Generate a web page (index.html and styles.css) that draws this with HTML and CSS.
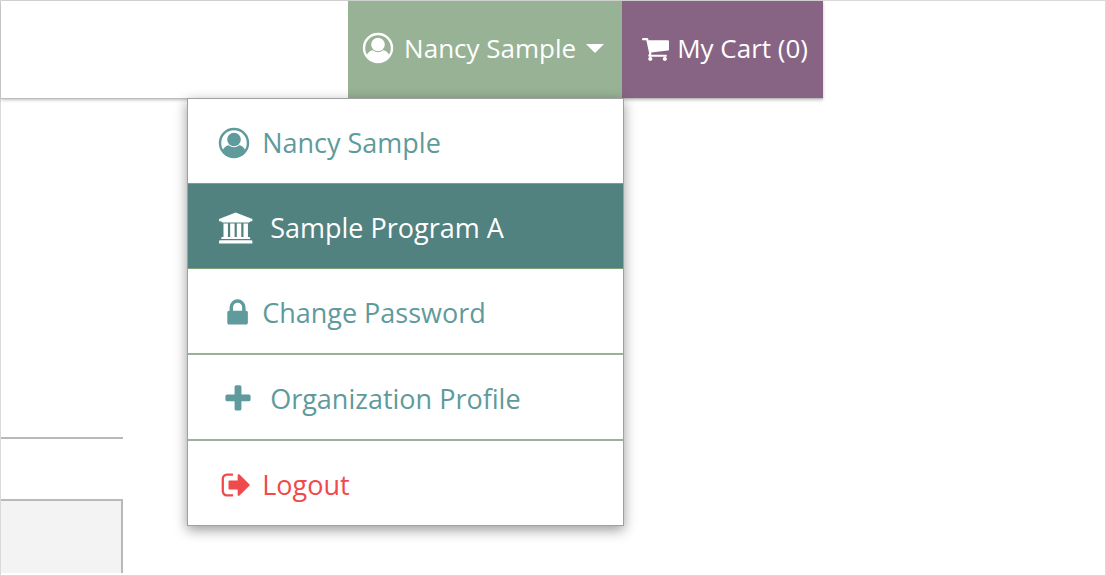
FILE: index.html
```html
<!DOCTYPE html>
<html lang="en">
<head>
    <meta charset="UTF-8">
    <title>My Account</title>
    <link rel="stylesheet" href="styles.css">
</head>
<body>
    <!-- shared shape, used in the bar and in the menu -->
    <svg class="symbols" width="0" height="0" aria-hidden="true">
        <symbol id="user" viewBox="0 0 32 32">
            <circle cx="16" cy="16" r="14" fill="none" stroke="currentColor" stroke-width="2.400"/>
            <circle cx="16" cy="12.500" r="6.800"/>
            <path d="M4.500 24C5.500 20.500 8 18.500 10.800 18.200C14 20.800 18 20.800 21.200 18.200C24 18.500 26.500 20.500 27.500 24C25 28.500 20 30 16 30S7 28.500 4.500 24z"/>
        </symbol>
    </svg>

    <div class="page">
        <header class="topbar">
            <div class="account">
                <button class="tab tab-account" type="button" aria-expanded="true">
                    <svg class="icon"><use href="#user"/></svg>
                    Nancy Sample
                    <span class="caret"></span>
                </button>
                <nav class="menu">
                    <a class="menu-item" href="#">
                        <svg class="icon"><use href="#user"/></svg>
                        Nancy Sample
                    </a>
                    <a class="menu-item is-active" href="#">
                        <svg class="icon icon-wide" viewBox="-60 0 2304 1792"><path d="M960 0l960 384v128h-128q0 26-20.500 45t-48.500 19h-1526q-28 0-48.500-19t-20.500-45h-128v-128zM256 640h256v768h128v-768h256v768h128v-768h256v768h128v-768h256v768h59q28 0 48.500 19t20.500 45v64h-1664v-64q0-26 20.500-45t48.500-19h59zM1851 1600q28 0 48.500 19t20.500 45v128h-1920v-128q0-26 20.500-45t48.500-19z"/></svg>
                        Sample Program A
                    </a>
                    <a class="menu-item" href="#">
                        <svg class="icon" viewBox="-200 0 1792 1792"><path d="M640 768h512v-192q0-106-75-181t-181-75-181 75-75 181v192zm832 96v576q0 40-28 68t-68 28h-960q-40 0-68-28t-28-68v-576q0-40 28-68t68-28h32v-192q0-184 132-316t316-132 316 132 132 316v192h32q40 0 68 28t28 68z"/></svg>
                        Change Password
                    </a>
                    <a class="menu-item" href="#">
                        <svg class="icon icon-wide" viewBox="0 0 1792 1792"><path d="M1600 736v192q0 40-28 68t-68 28h-416v416q0 40-28 68t-68 28h-192q-40 0-68-28t-28-68v-416h-416q-40 0-68-28t-28-68v-192q0-40 28-68t68-28h416v-416q0-40 28-68t68-28h192q40 0 68 28t28 68v416h416q40 0 68 28t28 68z"/></svg>
                        Organization Profile
                    </a>
                    <a class="menu-item menu-logout" href="#">
                        <svg class="icon" viewBox="-140 0 1792 1792"><path d="M704 1440q0 4 1 20t.5 26.500-3 23.500-10 19.500-20.500 6.500h-320q-119 0-203.500-84.500t-84.500-203.500v-704q0-119 84.500-203.500t203.500-84.500h320q13 0 22.500 9.500t9.500 22.500q0 4 1 20t.5 26.500-3 23.500-10 19.500-20.500 6.500h-320q-66 0-113 47t-47 113v704q0 66 47 113t113 47h312l11.500 1 11.500 3 8 5.500 7 9 2 13.500zm928-544q0 26-19 45l-544 544q-19 19-45 19t-45-19-19-45v-288h-448q-26 0-45-19t-19-45v-384q0-26 19-45t45-19h448v-288q0-26 19-45t45-19 45 19l544 544q19 19 19 45z"/></svg>
                        Logout
                    </a>
                </nav>
            </div>
            <a class="tab tab-cart" href="#">
                <svg class="icon icon-cart" viewBox="64 128 1664 1536"><path d="M704 1536q0 52-38 90t-90 38-90-38-38-90 38-90 90-38 90 38 38 90zm896 0q0 52-38 90t-90 38-90-38-38-90 38-90 90-38 90 38 38 90zm128-1088v512q0 24-16.500 42.500t-40.500 21.500l-1044 122q13 60 13 70 0 16-24 64h920q26 0 45 19t19 45-19 45-45 19h-1024q-26 0-45-19t-19-45q0-11 8-31.500t16-36 21.500-40 15.500-29.500l-177-823h-204q-26 0-45-19t-19-45 19-45 45-19h256q16 0 28.500 6.500t19.500 15.500 13 24.500 8 26 5.500 29.500 4.500 26h1201q26 0 45 19t19 45z"/></svg>
                My Cart (0)
            </a>
        </header>

        <aside class="sidebar">
            <div class="sidebar-title"></div>
            <div class="sidebar-panel"></div>
        </aside>
    </div>
</body>
</html>
```

FILE: styles.css
```css
* {
    box-sizing: border-box;
}

body {
    margin: 0;
    background: white;
    font-family: "Open Sans", sans-serif;
}

.symbols {
    position: absolute;
}

.page {
    display: flex;
    flex-direction: column;
    min-height: 100vh;
    border: 1px solid #d9d9d9;
}

/* top bar */
.topbar {
    display: flex;
    justify-content: flex-end;
    max-width: 822px;
    border-bottom: 1px solid #bdbdbd;
    box-shadow: 0 1px 3px rgba(0, 0, 0, 0.25);
}

.account {
    position: relative;
}

.tab {
    display: flex;
    align-items: center;
    height: 97px;
    border: 0;
    color: white;
    font-family: inherit;
    font-size: 26px;
    line-height: 32px;
    text-decoration: none;
    white-space: nowrap;
    cursor: pointer;
}

.tab-account {
    gap: 10px;
    padding: 0 18px 3px 14px;
    background: #97b294;
}

.tab-cart {
    gap: 8px;
    padding: 0 15px 3px 20px;
    background: #886484;
}

.caret {
    border: 9px solid transparent;
    border-top-color: white;
    border-bottom: 0;
}

.icon {
    flex: none;
    width: 32px;
    height: 32px;
    fill: currentColor;
}

.icon-wide {
    width: 40px;
}

.icon-cart {
    width: 27px;
    height: 25px;
}

/* dropdown */
.menu {
    position: absolute;
    top: 100%;
    right: -2px;
    z-index: 1;
    width: 437px;
    border: 1px solid #a0a0a0;
    background: white;
    box-shadow: 0 4px 12px rgba(0, 0, 0, 0.4);
}

.menu-item {
    display: flex;
    align-items: center;
    gap: 12px;
    height: 86px;
    padding: 3px 30px 0;
    border-bottom: 2px solid #97b294;
    color: #5f9a9c;
    font-size: 27px;
    line-height: 36px;
    text-decoration: none;
    white-space: nowrap;
}

.menu-item:first-child,
.menu-item.is-active {
    height: 85px;
    border-bottom: 1px solid #7da37b;
}

.menu-item.is-active {
    background: #518280;
    color: white;
}

.menu-item:last-child {
    height: 84px;
    border-bottom: 0;
}

.menu-item.menu-logout {
    color: #f04a4c;
}

/* left column */
.sidebar {
    display: flex;
    flex: 1;
    flex-direction: column;
    width: 122px;
    padding-bottom: 2px;
}

.sidebar-title {
    height: 340px;
    border-bottom: 2px solid #b9b9b9;
}

.sidebar-panel {
    flex: 1;
    margin-top: 60px;
    border: 2px solid #b9b9b9;
    border-width: 2px 2px 0 0;
    background: #f3f3f3;
}
```
